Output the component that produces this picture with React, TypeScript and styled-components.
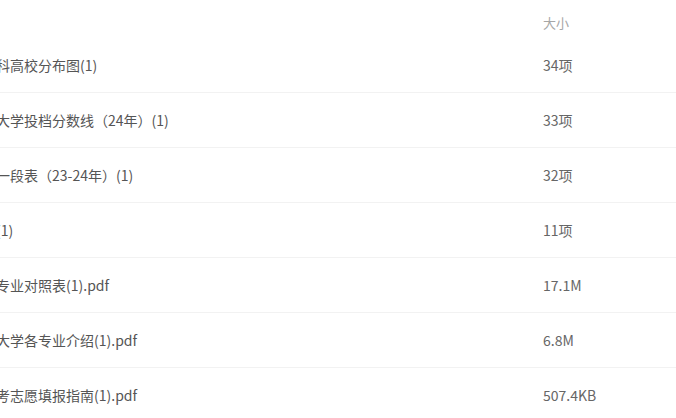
import styled, { createGlobalStyle } from 'styled-components';

const GlobalStyle = createGlobalStyle`
	html, body {
		margin: 0;
		padding: 0;
		background: #fff;
		overflow: hidden;
	}
	body {
		font-family: "Noto Sans CJK SC", "Microsoft YaHei", sans-serif;
	}
`;

interface FileItem {
	name: string;
	size: string;
}

const files: FileItem[] = [
	{ name: '新高考本科高校分布图(1)', size: '34项' },
	{ name: '中国传媒大学投档分数线（24年）(1)', size: '33项' },
	{ name: '高考一分一段表（23-24年）(1)', size: '32项' },
	{ name: '招生计划(1)', size: '11项' },
	{ name: '本科新旧专业对照表(1).pdf', size: '17.1M' },
	{ name: '中国传媒大学各专业介绍(1).pdf', size: '6.8M' },
	{ name: '浙江省高考志愿填报指南(1).pdf', size: '507.4KB' },
];

const App = () => {
	return (
		<>
			<GlobalStyle />
			<Viewport>
				<FileTable>
					<HeaderRow>
						<NameCell />
						<HeaderCell>大小</HeaderCell>
					</HeaderRow>
					{files.map((f) => (
						<FileRow key={f.name}>
							<NameCell>{f.name}</NameCell>
							<SizeCell>{f.size}</SizeCell>
						</FileRow>
					))}
				</FileTable>
			</Viewport>
		</>
	);
};

export default App;

const Viewport = styled.div`
	width: 676px;
	height: 418px;
	overflow: hidden;
`;

// the list is scrolled sideways, so the name column starts left of the crop
const FileTable = styled.div`
	display: flex;
	flex-direction: column;
	margin-left: -60px;
	width: 736px;
`;

const HeaderRow = styled.div`
	display: grid;
	grid-template-columns: 603px 1fr;
	height: 38px;
	padding-top: 10px;
	box-sizing: border-box;
`;

const HeaderCell = styled.div`
	font-size: 13px;
	line-height: 28px;
	color: #a6a6a6;
	align-self: start;
	margin-top: -1px;
`;

const FileRow = styled.div`
	display: grid;
	grid-template-columns: 603px 1fr;
	align-items: center;
	height: 55px;
	border-bottom: 1px solid #f2f2f2;
	box-sizing: border-box;
`;

const NameCell = styled.div`
	font-size: 14px;
	color: #555;
	white-space: nowrap;
	overflow: hidden;
	line-height: 20px;
`;

const SizeCell = styled.div`
	font-size: 14px;
	color: #666;
	line-height: 20px;
`;
